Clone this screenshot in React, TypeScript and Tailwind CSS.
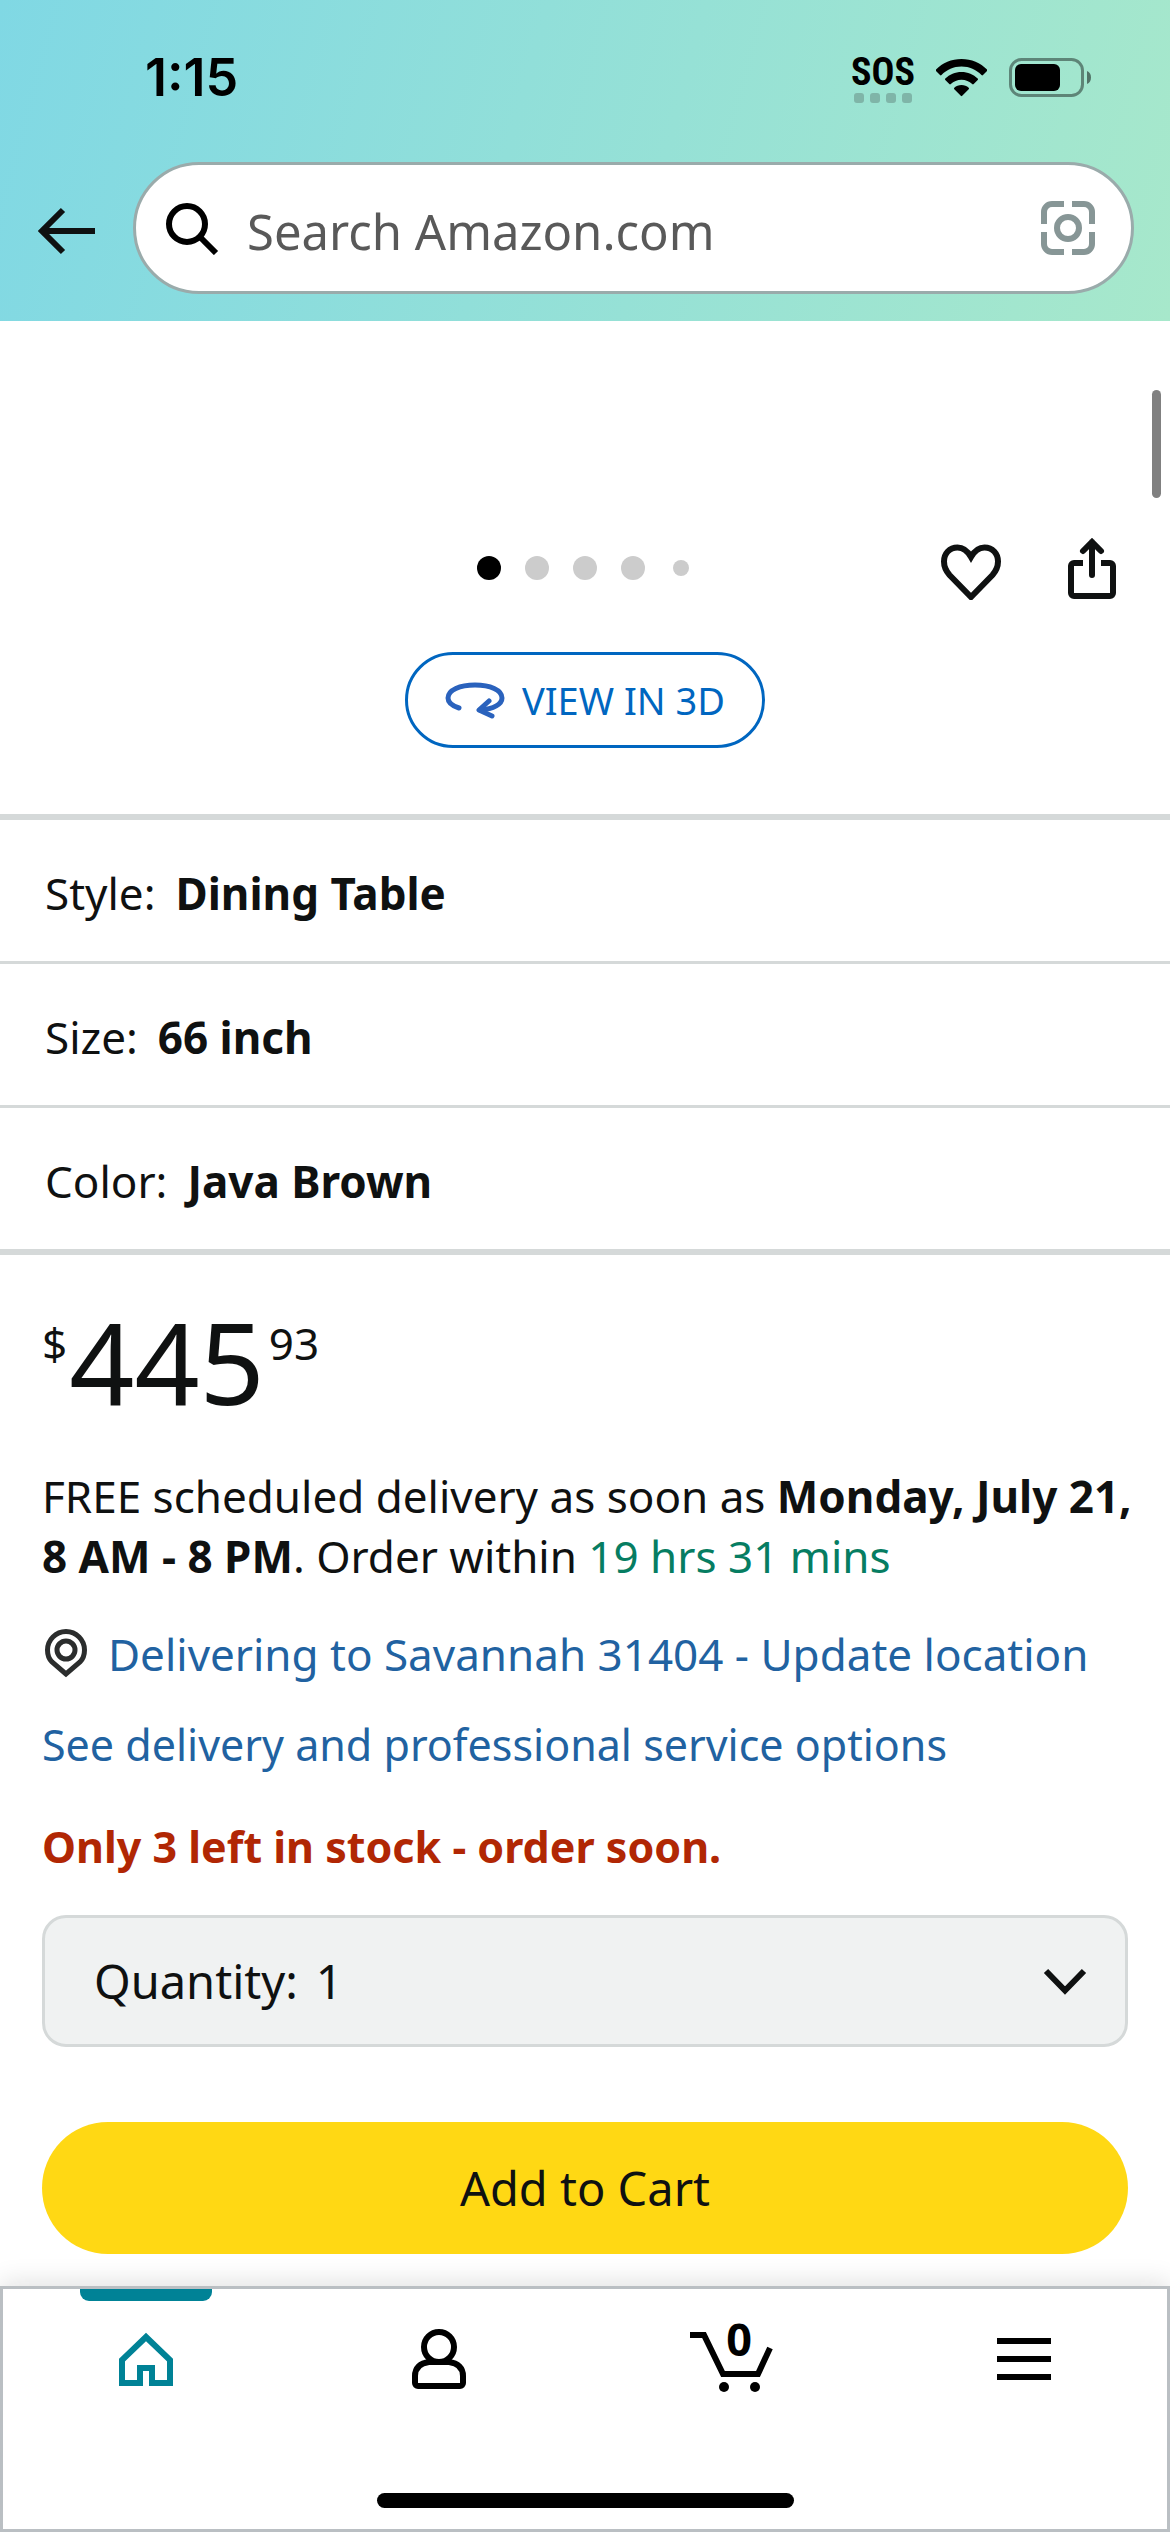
import type { ReactNode } from "react";

function StatusBar() {
  return (
    <div className="flex h-[162px] items-start justify-between pr-[78px] pl-[145px] pt-[48px] text-black">
      <time className="font-['Inter',sans-serif] text-[52px] leading-[60px] font-semibold">1:15</time>
      <div className="flex items-start">
        <div className="flex flex-col items-center">
          <span className="font-['Liberation_Sans_Narrow','Roboto_Condensed','Roboto',sans-serif] text-[38px] leading-[48px] font-bold">
            SOS
          </span>
          <div className="-mt-[3px] flex gap-[6px]">
            {[0, 1, 2, 3].map((i) => (
              <span key={i} className="size-[10px] rounded-[3px] bg-[#7fb5a8]" />
            ))}
          </div>
        </div>
        <svg className="mt-[11px] ml-[21px] h-[38px] w-[51px]" viewBox="0 0 51 38" aria-label="Wi-Fi">
          <path d="M25.500 0C15.500 0 6.500 4 0 10.500c-.5.500-.5 1 0 1.500l4 4c.5.500 1 .5 1.500 0C10.700 10.600 17.700 7.500 25.500 7.500s14.800 3.100 20 8.500c.5.500 1 .5 1.500 0l4-4c.5-.5.5-1 0-1.500C44.500 4 35.500 0 25.500 0z" />
          <path d="M25.500 13c-6.300 0-12 2.500-16.200 6.600-.5.500-.5 1 0 1.500l4 4c.5.500 1 .5 1.500 0 2.800-2.700 6.500-4.300 10.700-4.300s7.900 1.600 10.700 4.300c.5.500 1 .5 1.500 0l4-4c.5-.5.5-1 0-1.500C37.500 15.500 31.800 13 25.500 13z" />
          <path d="M25.500 26c-2.800 0-5.300 1-7.200 2.700-.5.500-.5 1 0 1.500l6.500 6.600c.5.500.9.5 1.400 0l6.500-6.600c.5-.5.5-1 0-1.500C30.800 27 28.300 26 25.500 26z" />
        </svg>
        <svg className="mt-[10px] ml-[22px] h-[39px] w-[83px]" viewBox="0 0 83 39" aria-label="Battery">
          <rect x="1.500" y="1.500" width="72" height="36" rx="11" fill="none" stroke="#000" strokeOpacity=".42" strokeWidth="3" />
          <rect x="6" y="6" width="45" height="27" rx="6" />
          <path d="M78 13c2.700 1 4 3.500 4 6.500s-1.300 5.500-4 6.500z" opacity=".5" />
        </svg>
      </div>
    </div>
  );
}

function Header() {
  return (
    <header className="bg-[linear-gradient(105deg,#80d8e4_0%,#a7e8cb_100%)] pb-[27px]">
      <StatusBar />
      <div className="flex items-center pr-[36px] pl-[38px]">
        <button type="button" aria-label="Back" className="mt-1.5 shrink-0">
          <svg className="h-[48px] w-[58px]" viewBox="0 0 58 48" fill="none" stroke="#0f1111" strokeWidth="6">
            <path d="M4 24h53M25 3L4 24l21 21" />
          </svg>
        </button>
        <form role="search" className="ml-[37px] flex h-[132px] min-w-0 flex-1 items-center rounded-[66px] border-[3px] border-[#9aabab] bg-white pr-[36px] pl-[29px]">
          <svg className="h-[54px] w-[54px] shrink-0" viewBox="0 0 54 54" fill="none" stroke="#000" strokeWidth="6" aria-hidden="true">
            <circle cx="22" cy="23" r="18" />
            <path d="M35 36l16 16" strokeWidth="6" />
          </svg>
          <input
            type="search"
            aria-label="Search Amazon.com"
            placeholder="Search Amazon.com"
            className="ml-[28px] min-w-0 flex-1 bg-transparent pt-1.5 text-[49px] leading-[60px] outline-none placeholder:text-[#595959]"
          />
          <button type="button" aria-label="Search by camera" className="shrink-0">
            <svg className="h-[54px] w-[54px]" viewBox="0 0 54 54" fill="none" stroke="#879696" strokeWidth="6">
              <path d="M3 23v-12a8 8 0 0 1 8-8h12M31 3h12a8 8 0 0 1 8 8v12M51 31v12a8 8 0 0 1-8 8h-12M23 51h-12a8 8 0 0 1-8-8v-12" />
              <circle cx="27" cy="27" r="11" />
            </svg>
          </button>
        </form>
      </div>
    </header>
  );
}

function Gallery() {
  return (
    <section aria-label="Product images" className="relative pt-[215px] pb-[66px]">
      <span className="absolute top-[69px] right-[9px] h-[108px] w-[9px] rounded-full bg-[#808080]" />
      <div className="grid grid-cols-[1fr_auto_1fr] items-center">
        <span />
        <div className="flex items-center gap-[24px]">
          <span className="size-[24px] rounded-full bg-black" />
          <span className="size-[24px] rounded-full bg-[#cccccc]" />
          <span className="size-[24px] rounded-full bg-[#cccccc]" />
          <span className="size-[24px] rounded-full bg-[#cccccc]" />
          <span className="mx-1 size-[16px] rounded-full bg-[#cccccc]" />
        </div>
        <div className="flex items-center justify-end gap-[65px] pr-[53px]">
          <button type="button" aria-label="Add to list">
            <svg className="h-[64px] w-[62px]" viewBox="0 0 62 64" fill="none" stroke="#0f1111" strokeWidth="6">
              <path d="M31 21C27 14 22 11.500 17.500 11.500C9.500 11.500 4 17.500 4 25.500C4 31 6 35 9.500 39L31 61L52.500 39C56 35 58 31 58 25.500C58 17.500 52.500 11.500 44.500 11.500C40 11.500 35 14 31 21z" />
            </svg>
          </button>
          <button type="button" aria-label="Share">
            <svg className="h-[64px] w-[50px]" viewBox="0 0 50 64" fill="none" stroke="#0f1111" strokeWidth="6">
              <path d="M16 27H7a3 3 0 0 0-3 3v27a3 3 0 0 0 3 3h36a3 3 0 0 0 3-3v-27a3 3 0 0 0-3-3h-9" />
              <path d="M25 39V6M16 15L25 6l9 9" strokeLinecap="round" />
            </svg>
          </button>
        </div>
      </div>
      <div className="mt-[52px] flex justify-center">
        <button type="button" className="flex h-[96px] items-center gap-[17px] rounded-full border-[3px] border-[#0066c0] px-[37px] text-[38px] leading-[48px] text-[#0066c0]">
          <svg className="h-[38px] w-[60px]" viewBox="0 0 60 38" fill="none" stroke="#2a62bd" strokeWidth="5" strokeLinecap="round" strokeLinejoin="round" aria-hidden="true">
            <path d="M14 27C6 24.500 3 21 3 17C3 9 15 4 30 4S57 9 57 17C57 23 49 28 35 29" />
            <path d="M44 20L34 29L47 35" />
          </svg>
          VIEW IN 3D
        </button>
      </div>
    </section>
  );
}

const options = [
  { name: "Style:", value: "Dining Table" },
  { name: "Size:", value: "66 inch" },
  { name: "Color:", value: "Java Brown" },
];

function Options() {
  return (
    <section aria-label="Options" className="divide-y-[3px] divide-[#d5d9d9] border-y-[6px] border-[#d5d9d9]">
      {options.map((o) => (
        <button key={o.name} type="button" className="flex h-[144px] w-full items-center gap-[20px] px-[45px] pt-1 text-left text-[44px] leading-[60px] last:h-[141px]">
          <span>{o.name}</span>
          <b className="font-bold">{o.value}</b>
        </button>
      ))}
    </section>
  );
}

function BuyBox() {
  return (
    <section aria-label="Buy" className="px-[42px] pt-[50px] pb-[32px]">
      <p className="flex items-start" aria-label="$445.93">
        <span className="pt-2 text-[44px] leading-[60px]">$</span>
        <span className="ml-0.5 text-[114px] leading-[112px]">445</span>
        <span className="ml-1 pt-2 text-[44px] leading-[60px]">93</span>
      </p>
      <p className="-mr-2 mt-[49px] text-[44px] leading-[60px]">
        FREE scheduled delivery as soon as <b className="font-bold">Monday, July 21, 8 AM - 8 PM</b>. Order within{" "}
        <span className="text-[#067d62]">19 hrs 31 mins</span>
      </p>
      <a href="#location" className="mt-[38px] flex items-center gap-[20px] text-[44px] leading-[60px] text-[#2162a1]">
        <svg className="h-[52px] w-[46px] shrink-0" viewBox="0 0 46 52" fill="none" stroke="#2b2d2d" strokeWidth="5" aria-hidden="true">
          <path d="M24 46L10 34C7 31 5.500 27 5.500 22A18.500 18.500 0 0 1 42.500 22C42.500 27 41 31 38 34z" />
          <circle cx="24" cy="22" r="9" />
        </svg>
        Delivering to Savannah 31404 - Update location
      </a>
      <a href="#services" className="mt-[31px] block leading-[60px] text-[#2162a1]">
        See delivery and professional service options
      </a>
      <p className="mt-[42px] leading-[60px] font-bold text-[#b12704]">Only 3 left in stock - order soon.</p>
      <div className="relative mt-[38px] flex h-[132px] items-center rounded-[24px] border-[3px] border-[#d5d9d9] bg-[#f0f2f2] pl-[49px] text-[47px]">
        <label htmlFor="quantity">Quantity:</label>
        <select id="quantity" defaultValue="1" className="h-full min-w-0 flex-1 appearance-none bg-transparent pl-[18px] outline-none">
          <option>1</option>
          <option>2</option>
          <option>3</option>
        </select>
        <svg className="pointer-events-none absolute right-[38px] h-[28px] w-[44px]" viewBox="0 0 44 28" fill="none" stroke="#0f1111" strokeWidth="6" aria-hidden="true">
          <path d="M3 4l19 19.500L41 4" />
        </svg>
      </div>
      <button type="button" className="mt-[75px] h-[132px] w-full rounded-full bg-[#ffd814] text-[47px]">
        Add to Cart
      </button>
    </section>
  );
}

function Tab({ label, children }: { label: string; children: ReactNode }) {
  return (
    <a href={"#" + label.toLowerCase()} aria-label={label} className="relative flex justify-center pt-[38px]">
      {children}
    </a>
  );
}

function BottomNav() {
  return (
    <nav className="relative mt-auto flex h-[246px] flex-col justify-between bg-white pb-[24px] shadow-[inset_0_0_0_3px_#babfc3,0_-4px_24px_rgba(15,17,17,0.12)]">
      <div className="grid grid-cols-4">
        <Tab label="Home">
          <span className="absolute top-[3px] h-[12px] w-[132px] rounded-b-[9px] bg-[#008296]" />
          <svg className="h-[70px] w-[60px]" viewBox="0 0 60 70" fill="none" stroke="#008296" strokeWidth="6">
            <path d="M6 59V36L30 13L54 36V59H36V44H24V59z" />
          </svg>
        </Tab>
        <Tab label="Account">
          <svg className="h-[70px] w-[60px]" viewBox="0 0 60 70" fill="none" stroke="#000" strokeWidth="6">
            <circle cx="30" cy="23" r="15" />
            <path d="M20 38C11 39 6 44 6 52V59a3 3 0 0 0 3 3h42a3 3 0 0 0 3-3v-7C54 44 49 39 40 38z" />
          </svg>
        </Tab>
        <Tab label="Cart">
          <div className="relative">
            <svg className="h-[70px] w-[84px]" viewBox="0 0 84 70" fill="none" stroke="#000" strokeWidth="6">
              <path d="M1 11H15L34 50H69L81 24" />
              <circle cx="35" cy="63" r="5" fill="#000" stroke="none" />
              <circle cx="66" cy="63" r="5" fill="#000" stroke="none" />
            </svg>
            <span className="absolute -top-[11px] left-[37px] text-[45px] leading-[52px] font-bold text-black">0</span>
          </div>
        </Tab>
        <Tab label="Menu">
          <svg className="h-[70px] w-[54px]" viewBox="0 0 54 70" stroke="#000" strokeWidth="6">
            <path d="M0 17h54M0 35h54M0 53h54" />
          </svg>
        </Tab>
      </div>
      <span className="mx-auto h-[15px] w-[417px] rounded-full bg-black" />
    </nav>
  );
}

export default function App() {
  return (
    <div className="flex min-h-screen flex-col bg-white font-['Noto_Sans',sans-serif] text-[43px] text-[#0f1111]">
      <Header />
      <main>
        <Gallery />
        <Options />
        <BuyBox />
      </main>
      <BottomNav />
    </div>
  );
}
